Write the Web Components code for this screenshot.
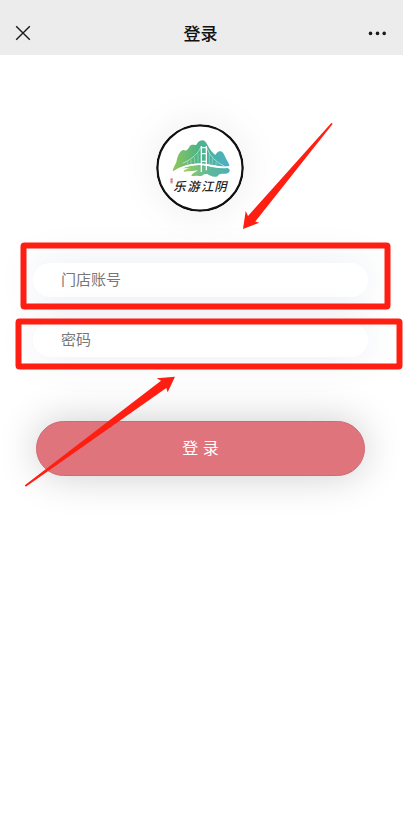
<!DOCTYPE html>
<html lang="zh-CN">
<head>
<meta charset="UTF-8">
<meta name="viewport" content="width=device-width, initial-scale=1">
<title>登录</title>
<style>
  body {
    margin: 0;
    background: #fff;
    font-family: "Noto Sans CJK SC", sans-serif;
    min-height: 100vh;
  }
</style>
</head>
<body>
<login-page>
  <nav-bar>登录</nav-bar>
  <brand-logo></brand-logo>
  <login-form></login-form>
  <guide-marks></guide-marks>
</login-page>

<script>
class LoginPage extends HTMLElement {
  constructor() {
    super();
    this.attachShadow({ mode: 'open' }).innerHTML = `
      <style>
        :host {
          display: flex;
          flex-direction: column;
          position: relative;
          overflow: hidden;
          min-height: 100vh;
        }
      </style>
      <slot></slot>
    `;
  }
}

class NavBar extends HTMLElement {
  constructor() {
    super();
    this.attachShadow({ mode: 'open' }).innerHTML = `
      <style>
        :host {
          display: block;
          background: #ececec;
        }
        header {
          display: grid;
          grid-template-columns: 1fr auto 1fr;
          align-items: center;
          height: 44px;
          padding: 11px 17px 0 15px;
        }
        h1 {
          margin: 0;
          font-size: 17px;
          line-height: 24px;
          font-weight: 500;
          color: #111;
        }
        button {
          display: flex;
          padding: 0;
          border: none;
          background: none;
          cursor: pointer;
        }
        .more { justify-self: end; }
      </style>
      <header>
        <button type="button" aria-label="关闭">
          <svg width="16" height="16" viewBox="0 0 16 16" fill="none" stroke="#1a1a1a" stroke-width="1.4">
            <path d="M1.2 1.2 14.8 14.8M14.8 1.2 1.2 14.8"/>
          </svg>
        </button>
        <h1><slot></slot></h1>
        <button type="button" class="more" aria-label="更多">
          <svg width="18" height="6" viewBox="0 0 18 6" fill="#1a1a1a">
            <circle cx="2.5" cy="3.4" r="1.8"/><circle cx="9.5" cy="3.4" r="1.8"/><circle cx="16.2" cy="3.4" r="1.8"/>
          </svg>
        </button>
      </header>
    `;
  }
}

class BrandLogo extends HTMLElement {
  constructor() {
    super();
    this.attachShadow({ mode: 'open' }).innerHTML = `
      <style>
        :host {
          display: flex;
          justify-content: center;
          padding: 69px 3px 0 0;
        }
        svg {
          display: block;
          border-radius: 50%;
          background: #fff;
          box-shadow: 0 0 40px rgba(0, 0, 0, 0.08);
        }
        text {
          font-family: "Noto Sans CJK SC", sans-serif;
          font-size: 37px;
          font-style: italic;
          font-weight: 500;
          fill: #222;
        }
      </style>
      <svg width="88" height="88" viewBox="19 19 264 264" role="img" aria-label="乐游江阴">
        <defs>
          <linearGradient id="hill" x1="0" y1="0" x2="1" y2="0">
            <stop offset="0" stop-color="#8fc65a"/>
            <stop offset=".45" stop-color="#4db487"/>
            <stop offset="1" stop-color="#4bb0c8"/>
          </linearGradient>
          <linearGradient id="river" x1="0" y1="0" x2="1" y2="0">
            <stop offset="0" stop-color="#a3cf55"/>
            <stop offset=".5" stop-color="#62bb96"/>
            <stop offset="1" stop-color="#4caeb5"/>
          </linearGradient>
        </defs>
        <circle cx="151" cy="151" r="128" fill="#fff" stroke="#111" stroke-width="7"/>
        <path fill="url(#hill)" d="M69 161C72 147 76 143 80 134C83 114 92 96 103 97C110 101 113 98 120 86C127 78 134 84 140 81C146 71 151 68 159 68C168 69 172 80 178 90C183 99 190 105 197 112C202 103 207 99 214 101C222 104 226 117 231 126C235 133 239 138 239 146L214 148C184 141 160 136 136 138C109 141 90 151 69 161Z"/>
        <path fill="url(#river)" d="M98 152C120 143 147 138 174 145C194 150 213 153 232 151C241 153 242 158 238 164C231 171 220 167 213 169C202 171 209 176 199 177C186 178 180 173 173 169L163 170C157 178 150 174 142 174C134 174 131 177 125 174C126 168 137 164 145 158C134 161 120 160 103 162C98 158 113 154 121 152Z"/>
        <g fill="none" stroke="#fff">
          <path stroke-width="4" d="M155 85V163M170 85V158M155 90H170M155 108H170M155 131H170"/>
          <path stroke-width="1.5" d="M155 87Q139 120 99 137M170 87Q184 128 224 145"/>
          <path stroke-width="1" d="M145 107V135M135 119V137M124 126V139M114 131V142M179 108V139M188 122V141M199 133V145"/>
          <path stroke-width="4" d="M74 161C98 146 131 135 174 142C196 147 215 150 239 148"/>
        </g>
        <path fill="none" stroke="#d84d4d" stroke-width="2" d="M64 182V197M67 181V198M63 186H69M63 192H69"/>
        <text x="71" y="219">乐</text>
        <text x="113" y="219">游</text>
        <text x="154" y="219">江</text>
        <text x="194" y="219">阴</text>
      </svg>
    `;
  }
}

class PillInput extends HTMLElement {
  constructor() {
    super();
    const type = this.getAttribute('type') || 'text';
    const label = this.getAttribute('label');
    this.attachShadow({ mode: 'open' }).innerHTML = `
      <style>
        :host { display: block; }
        input {
          display: block;
          box-sizing: border-box;
          width: 100%;
          height: 34px;
          padding: 0 28px 4px;
          border: none;
          border-radius: 17px;
          outline: none;
          background: #fff;
          box-shadow: 0 0 40px rgba(60, 80, 140, 0.11);
          font-family: inherit;
          font-size: 15px;
          line-height: 22px;
          color: #333;
        }
        input::placeholder { color: #777; opacity: 1; }
      </style>
      <input type="${type}" placeholder="${label}" aria-label="${label}">
    `;
  }
}

class LoginForm extends HTMLElement {
  constructor() {
    super();
    this.attachShadow({ mode: 'open' }).innerHTML = `
      <style>
        :host {
          display: block;
          padding: 51px 35px 0 33px;
        }
        form {
          display: flex;
          flex-direction: column;
          gap: 26px;
        }
        button {
          height: 55px;
          margin: 38px 3px 0;
          border: 1px solid #d06a74;
          border-radius: 28px;
          background: #df747c;
          box-shadow: 0 0 40px rgba(0, 0, 0, 0.2);
          color: #fff;
          font-family: "Liberation Sans", "Noto Sans CJK SC", sans-serif;
          font-size: 16px;
          line-height: 24px;
          cursor: pointer;
        }
      </style>
      <form>
        <pill-input label="门店账号"></pill-input>
        <pill-input type="password" label="密码"></pill-input>
        <button type="submit">登 录</button>
      </form>
    `;
    this.shadowRoot.querySelector('form').addEventListener('submit', (e) => e.preventDefault());
  }
}

// Red frames and arrows that point at the two fields
class GuideMarks extends HTMLElement {
  constructor() {
    super();
    this.attachShadow({ mode: 'open' }).innerHTML = `
      <style>
        :host {
          position: absolute;
          top: 0;
          left: 0;
          pointer-events: none;
        }
        svg { display: block; }
      </style>
      <svg width="403" height="500" viewBox="0 0 403 500" aria-hidden="true">
        <g fill="none" stroke="#ff1f12" stroke-width="6" stroke-linejoin="round">
          <rect x="23.5" y="245.5" width="364" height="61" rx="1"/>
          <rect x="18.5" y="321.5" width="381" height="45" rx="1"/>
        </g>
        <g fill="#ff1f12">
          <path d="M243 229 245.7 211 248 216 331.3 123 332.8 123.8 255.3 221.5 259.3 222.7Z"/>
          <path d="M175 376.7 156.7 378.3 161 380.7 24.8 485.3 25.8 486.8 166.3 388 167.7 392.3Z"/>
        </g>
      </svg>
    `;
  }
}

customElements.define('login-page', LoginPage);
customElements.define('nav-bar', NavBar);
customElements.define('brand-logo', BrandLogo);
customElements.define('pill-input', PillInput);
customElements.define('login-form', LoginForm);
customElements.define('guide-marks', GuideMarks);
</script>
</body>
</html>
